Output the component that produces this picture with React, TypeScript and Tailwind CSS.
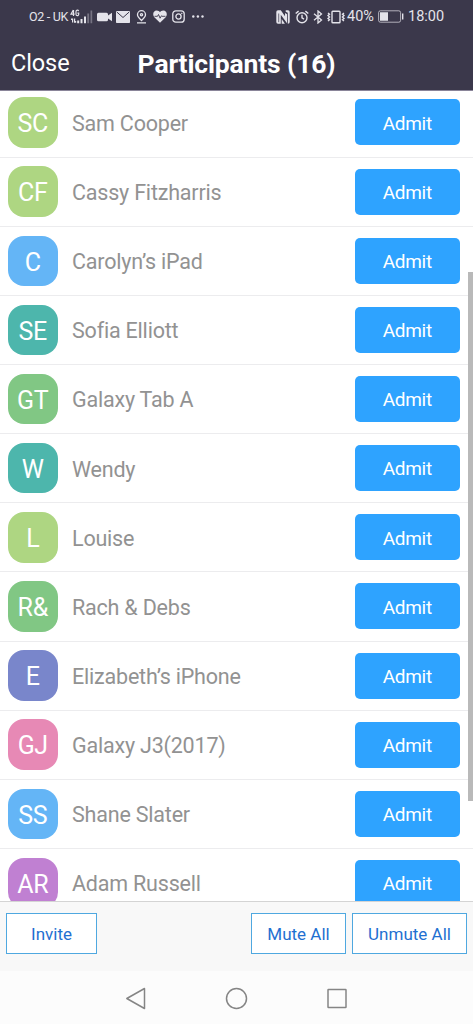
const participants = [
  { initials: "SC", name: "Sam Cooper", color: "bg-[#aed682]" },
  { initials: "CF", name: "Cassy Fitzharris", color: "bg-[#aed682]" },
  { initials: "C", name: "Carolyn’s iPad", color: "bg-[#64b5f6]" },
  { initials: "SE", name: "Sofia Elliott", color: "bg-[#4db6ac]" },
  { initials: "GT", name: "Galaxy Tab A", color: "bg-[#81c784]" },
  { initials: "W", name: "Wendy", color: "bg-[#4db6ac]" },
  { initials: "L", name: "Louise", color: "bg-[#aed682]" },
  { initials: "R&", name: "Rach & Debs", color: "bg-[#81c784]" },
  { initials: "E", name: "Elizabeth’s iPhone", color: "bg-[#7986cb]" },
  { initials: "GJ", name: "Galaxy J3(2017)", color: "bg-[#e789b5]" },
  { initials: "SS", name: "Shane Slater", color: "bg-[#64b5f6]" },
  { initials: "AR", name: "Adam Russell", color: "bg-[#c080d2]" },
];

function StatusBar() {
  return (
    <div className="flex h-[33px] items-center justify-between px-[29px] text-[#e4e3ea]">
      <div className="flex items-center">
        <span className="w-[41px] whitespace-nowrap pt-px text-[12.500px] tracking-[-0.300px]">O2 - UK</span>
        {/* 4G signal */}
        <svg width="23" height="16" viewBox="0 0 23 16" fill="currentColor" className="mr-[4px]">
          <path d="M3.300 1 1 5.200h3.600M3.500 1v6M8.600 2.200C8.200.7 6 .8 6 2.700v2.500c0 2 2.700 2 2.700.1V4.200H7.400" fill="none" stroke="currentColor" strokeWidth="1.200" />
          <path d="M1 9.500h2.200v4H2v-2.500H1zM4 9.500h1.200v2.500h1v1.700H4zM7.200 11.500h2v2.700h-2zM10.500 10h2v4.200h-2zM14 7.500h2v6.700h-2z" />
          <path d="M17.300 4.500h1.800v9.700h-1.800zM20.500 1.500h1.700v12.700h-1.700z" opacity=".35" />
        </svg>
        <svg width="15" height="10" viewBox="0 0 15 10" fill="currentColor" className="mr-[4px]">
          <path d="M1.500.8h8Q11 .8 11 2.300v1.200L15 .8v8.400l-4-2.700v1.200q0 1.500-1.500 1.500h-8Q0 9.200 0 7.700V2.300Q0 .8 1.500.8z" />
        </svg>
        <svg width="14" height="12" viewBox="0 0 14 12" className="mr-[6px]">
          <rect width="14" height="12" rx=".7" fill="currentColor" />
          <path d="m.8 1 6.200 5.500L13.200 1" fill="none" stroke="#3b384b" strokeWidth="1" />
        </svg>
        <svg width="11" height="14" viewBox="0 0 11 14" fill="none" stroke="currentColor" strokeWidth="1.300" className="mr-[6px]">
          <path d="M5.500 10.500C3.500 8.500 1.500 6.700 1.500 4.700a4 4 0 0 1 8 0c0 2-2 3.800-4 5.800zM1 12.800h9" />
          <circle cx="5.500" cy="4.700" r="1.100" />
        </svg>
        <svg width="14" height="13" viewBox="0 0 14 13" className="mr-[5px]">
          <path d="M7 12.800 1.300 7.300C-.8 4.700.2.500 3.700.500 5.300.500 6.400 1.300 7 2.300 7.600 1.300 8.700.500 10.300.500c3.500 0 4.500 4.200 2.400 6.800z" fill="currentColor" />
          <path d="M1.500 6.300h3l1-1.800 1.600 3.700 1.300-2.400.6.500h3.500" fill="none" stroke="#3b384b" strokeWidth=".9" />
        </svg>
        <svg width="13" height="13" viewBox="0 0 13 13" fill="none" stroke="currentColor" strokeWidth="1.300" className="mr-[7px]">
          <rect x=".8" y=".8" width="11.400" height="11.400" rx="3" />
          <circle cx="6.500" cy="6.500" r="2.600" />
          <path d="M9.200 3.300h1.200" />
        </svg>
        <svg width="12" height="3" viewBox="0 0 12 3" fill="currentColor">
          <circle cx="1.300" cy="1.500" r="1.200" />
          <circle cx="5.900" cy="1.500" r="1.200" />
          <circle cx="10.500" cy="1.500" r="1.200" />
        </svg>
      </div>
      <div className="flex items-center">
        {/* NFC */}
        <svg width="14" height="14" viewBox="0 0 14 14" fill="currentColor" className="mr-[5px]">
          <path d="M2 .3h2.800l4.200 6V3l2 1.200v9L4.800 4.700v9H2Q.3 13.700.3 12V2Q.3.300 2 .3z" />
          <path d="M9.700.3H12Q13.700.3 13.700 2v10q0 1.700-1.700 1.700h-.2V2.700l-2.100-1z" />
          <path d="M2.700 3.500v8.700" fill="none" stroke="#3b384b" strokeWidth=".7" />
          <path d="m5.700 9 3.200 4.700H5.700z" />
        </svg>
        {/* Alarm */}
        <svg width="14" height="14" viewBox="0 0 14 14" fill="none" stroke="currentColor" strokeWidth="1.400" className="mr-[4px]">
          <circle cx="7" cy="7.700" r="5" />
          <path d="M7 4.700v3.200l2 1.300M.7 3.500l2.900-2.400M13.300 3.500l-2.900-2.400" />
        </svg>
        {/* Bluetooth */}
        <svg width="10" height="14" viewBox="0 0 10 14" fill="none" stroke="currentColor" strokeWidth="1.300" className="mr-[4px]">
          <path d="M1 3.800 8.500 10 5 13V1l3.500 3L1 10.200" />
        </svg>
        {/* Vibrate */}
        <svg width="18" height="14" viewBox="0 0 18 14" fill="none" stroke="currentColor" strokeWidth="1.400" className="mr-[2px]">
          <rect x="5" y="1.200" width="8" height="11.600" rx=".8" />
          <path d="m1 3 1.500 1.200L1 5.600 2.500 7 1 8.400l1.500 1.400L1 11M17 3l-1.500 1.200L17 5.600 15.500 7 17 8.400l-1.500 1.400L17 11" />
        </svg>
        <span className="w-[31px] whitespace-nowrap pt-px text-[14.500px]">40%</span>
        <svg width="26" height="13" viewBox="0 0 26 13" className="mr-[4px]">
          <rect x=".6" y=".8" width="22" height="11.400" rx="1.800" fill="none" stroke="currentColor" strokeOpacity=".7" />
          <path d="M2 2.200h8v8.600H2zM24 3.500h1.400v6H24z" fill="currentColor" />
        </svg>
        <span className="w-[36px] whitespace-nowrap pt-px text-[14.500px]">18:00</span>
      </div>
    </div>
  );
}

function FooterButton({ label, className }: { label: string; className: string }) {
  return (
    <button
      className={`h-[41px] border border-[#4fa8e0] bg-white pt-[2px] text-[17px] text-[#1f70d1] ${className}`}
    >
      {label}
    </button>
  );
}

export default function App() {
  return (
    <div className="flex h-[1024px] w-[473px] flex-col overflow-hidden bg-white font-['Roboto',sans-serif]">
      <header className="h-[91px] shrink-0 border-b border-[#8a8599] bg-[#3b384b]">
        <StatusBar />
        <div className="grid h-[58px] grid-cols-[1fr_auto_1fr] items-center px-[11px] pt-[3px] text-white">
          <button className="text-left text-[23.500px] tracking-[-0.100px]">Close</button>
          <h1 className="text-[26.500px] font-bold tracking-[-0.150px]">Participants (16)</h1>
        </div>
      </header>

      <main className="relative min-h-0 flex-1 overflow-hidden">
        <ul className="-mt-[2.600px]">
          {participants.map((p) => (
            <li
              key={p.name}
              className="flex h-[69.150px] items-center border-b border-[#ececee] pl-[7.500px] pr-[13px]"
            >
              <span
                className={`flex size-[50.500px] items-center justify-center rounded-[16px] pt-[3px] text-[25px] tracking-[-0.300px] text-white ${p.color}`}
              >
                {p.initials}
              </span>
              <span className="ml-[14px] flex-1 pt-[3px] text-[21.500px] tracking-[-0.200px] text-[#929292]">
                {p.name}
              </span>
              <button className="h-[46px] w-[105.500px] rounded-[5px] bg-[#2ea3ff] pt-[3px] text-[19px] tracking-[-0.300px] text-white">
                Admit
              </button>
            </li>
          ))}
        </ul>
        {/* Scroll thumb sits over the rows */}
        <div className="absolute right-0 top-[181px] h-[529px] w-[5px] bg-[#b9b9b9]" />
      </main>

      <footer className="flex h-[70px] shrink-0 items-start border-t border-[#d4d4d4] bg-[#f8f8f8] px-[6px] pt-[11px]">
        <FooterButton label="Invite" className="mr-auto w-[91px]" />
        <FooterButton label="Mute All" className="mr-[6px] w-[95px]" />
        <FooterButton label="Unmute All" className="w-[115px]" />
      </footer>

      <nav className="flex h-[53px] shrink-0 items-center justify-center bg-[#fcfcfc]">
        <svg width="222" height="24" viewBox="0 0 222 24" fill="none" stroke="#858585" strokeWidth="1.500" strokeLinejoin="round">
          <path d="M.8 12.500 18.500 2.500v20z" />
          <circle cx="110.500" cy="12.500" r="10" />
          <rect x="202" y="3.500" width="18" height="18" rx=".5" />
        </svg>
      </nav>
    </div>
  );
}
